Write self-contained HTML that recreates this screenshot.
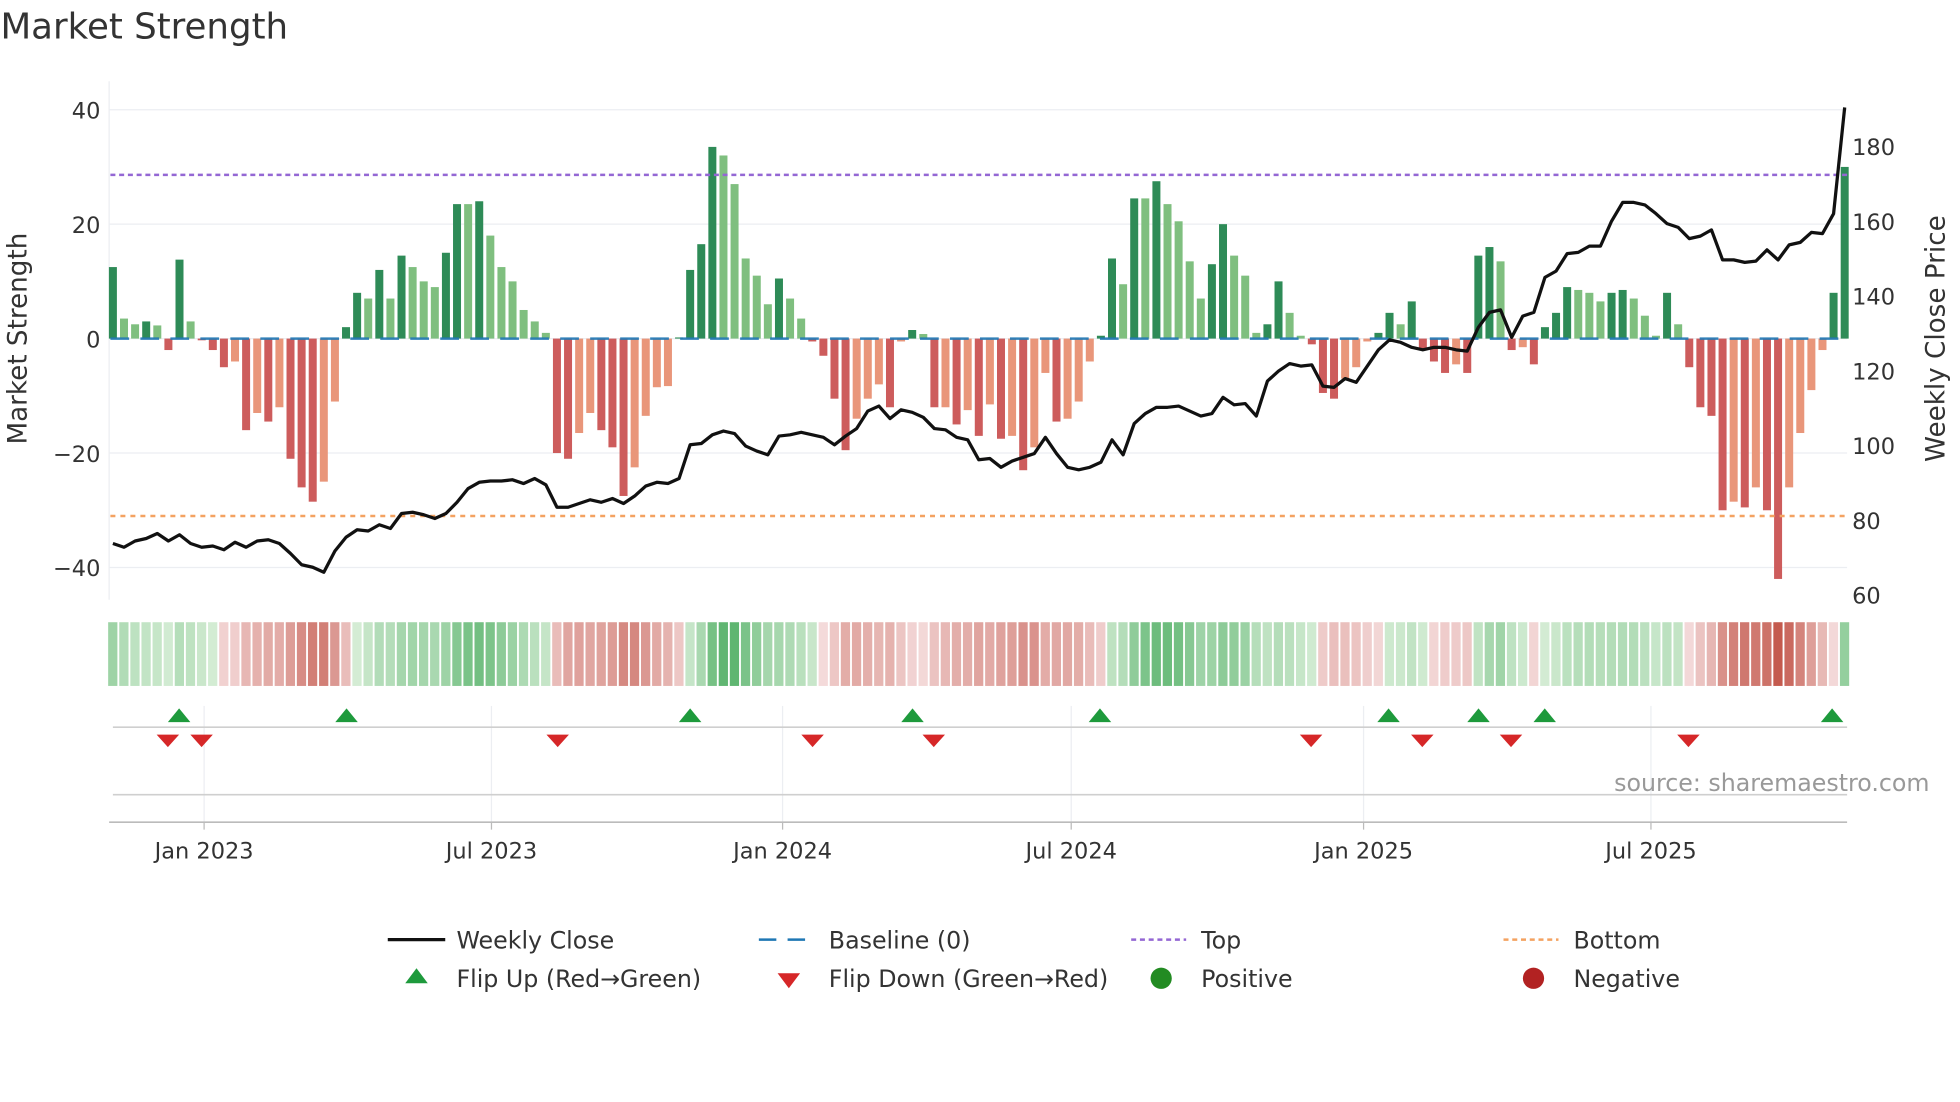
<!DOCTYPE html>
<html><head><meta charset="utf-8"><style>
html,body{margin:0;padding:0;background:#fff;width:1960px;height:1102px;overflow:hidden}
svg{display:block}
text{font-family:"DejaVu Sans","Liberation Sans",sans-serif;fill:#333}
</style></head><body>
<svg id="s" width="1960" height="1102" viewBox="0 0 1568 882" xmlns="http://www.w3.org/2000/svg">
<text x="0" y="31" font-size="28.5">Market Strength</text>
<g id="g"></g>
<text x="1544" y="633" font-size="19" text-anchor="end" style="fill:#999">source: sharemaestro.com</text>
</svg>
<script>
const V=[12.5,3.5,2.5,3,2.3,-2,13.8,3,-0.3,-2,-5,-4,-16,-13,-14.5,-12,-21,-26,-28.5,-25,-11,2,8,7,12,7,14.5,12.5,10,9,15,23.5,23.5,24,18,12.5,10,5,3,1,-20,-21,-16.5,-13,-16,-19,-27.5,-22.5,-13.5,-8.5,-8.3,0.2,12,16.5,33.5,32,27,14,11,6,10.5,7,3.5,-0.5,-3,-10.5,-19.5,-14,-10.5,-8,-12,-0.5,1.5,0.8,-12,-12,-15,-12.5,-17,-11.5,-17.5,-17,-23,-19,-6,-14.5,-14,-11,-4,0.5,14,9.5,24.5,24.5,27.5,23.5,20.5,13.5,7,13,20,14.5,11,1,2.5,10,4.5,0.5,-1,-9.5,-10.5,-7,-5,-0.5,1,4.5,2.5,6.5,-2,-4,-6,-4.5,-6,14.5,16,13.5,-2,-1.5,-4.5,2,4.5,9,8.5,8,6.5,8,8.5,7,4,0.5,8,2.5,-5,-12,-13.5,-30,-28.5,-29.5,-26,-30,-42,-26,-16.5,-9,-2,8,30];
const P=[435,438,433,431,427,433,428,435,438,437,440,434,438,433,432,435,443,452,454,458,441,430,424,425,420,423,411,410,412,415,411,402,391,386,385,385,384,387,383,388,406,406,403,400,402,399,403,397,389,386,387,383,356,355,348,345,347,357,361,364,349,348,346,348,350,356,349,343,329,325,335,328,330,334,343,344,350,352,368,367,374,369,366,363,350,363,374,376,374,370,352,364,339,331,326,326,325,329,333,331,318,324,323,333,305,297,291,293,292,309,310,303,306,293,280,272,274,278,280,278,278,280,281,262,250,248,270,253,250,222,217,203,202,197,197,177,162,162,164,171,179,182,191,189,184,208,208,210,209,200,208,196,194,186,187,171,86];
const X=i=>90+i*8.885, Y=v=>271-v*4.58;
let h='';
[40,20,0,-20,-40].forEach(v=>{h+=`<line x1="87" x2="1478" y1="${Y(v)}" y2="${Y(v)}" stroke="#eceef2" stroke-width="1"/>`;
h+=`<text x="80" y="${Y(v)+7}" font-size="18" text-anchor="end">${v<0?'\u2212'+(-v):v}</text>`});
[180,160,140,120,100,80,60].forEach(p=>{const y=476-(p-60)*2.99;h+=`<text x="1482" y="${y+7}" font-size="18">${p}</text>`});
h+=`<line x1="87" x2="87" y1="65" y2="480" stroke="#eceef2"/>`;
h+=`<text transform="translate(21,271) rotate(-90)" font-size="21" text-anchor="middle">Market Strength</text>`;
h+=`<text transform="translate(1556,271) rotate(-90)" font-size="21" text-anchor="middle">Weekly Close Price</text>`;
V.forEach((v,i)=>{const pv=i?V[i-1]:0;let c;
 if(v>=0)c=v>pv?'#2e8b57':'#7fbf7f';else c=v<pv?'#cd5c5c':'#e9967a';
 const y=v>=0?Y(v):271,hh=Math.abs(v)*4.58;h+=`<rect x="${X(i)-3.2}" y="${y}" width="6.4" height="${Math.max(hh,0.6)}" fill="${c}"/>`;});
h+=`<line x1="88" x2="1478" y1="271" y2="271" stroke="#1f77b4" stroke-width="2" stroke-dasharray="15,9" opacity=".9"/>`;
h+=`<line x1="88" x2="1478" y1="140" y2="140" stroke="#9467d4" stroke-width="2" stroke-dasharray="4,3"/>`;
h+=`<line x1="88" x2="1478" y1="413" y2="413" stroke="#f4a261" stroke-width="2" stroke-dasharray="4,4"/>`;
h+=`<polyline fill="none" stroke="#111" stroke-width="2.6" stroke-linejoin="round" points="${P.map((y,i)=>X(i)+','+y).join(' ')}"/>`;
let e=0;V.forEach((v,i)=>{e=i?e*0.5+v*0.5:v;let c;
 if(e>=0){const t=Math.min(e/30,1);c=`rgb(${Math.round(212-t*130)},${Math.round(236-t*60)},${Math.round(212-t*110)})`;}
 else{const t=Math.min(-e/35,1);c=`rgb(${Math.round(244-t*48)},${Math.round(218-t*128)},${Math.round(218-t*140)})`;}
 h+=`<rect x="${X(i)-3.8}" y="498" width="7.4" height="51" fill="${c}"/>`;});
[163,393,626,857,1091,1321].forEach(x=>{h+=`<line x1="${x}" x2="${x}" y1="565" y2="658" stroke="#eceef2"/>`});
h+=`<line x1="90" x2="1478" y1="582" y2="582" stroke="#cfcfcf" stroke-width="1.3"/>`;
h+=`<line x1="90" x2="1478" y1="636" y2="636" stroke="#cfcfcf" stroke-width="1.3"/>`;
h+=`<line x1="87" x2="1478" y1="658" y2="658" stroke="#bbb" stroke-width="1.3"/>`;
const up=x=>`<polygon points="${x-9},${578} ${x+9},${578} ${x},${567}" fill="#1e9a3c"/>`;
const dn=x=>`<polygon points="${x-9},${588} ${x+9},${588} ${x},${598}" fill="#d62728"/>`;
[143,277,552,730,880,1111,1183,1236,1466].forEach(x=>h+=up(x));
[134,161,446,650,747,1049,1138,1209,1351].forEach(x=>h+=dn(x));
[['Jan 2023',163],['Jul 2023',393],['Jan 2024',626],['Jul 2024',857],['Jan 2025',1091],['Jul 2025',1321]].forEach(([t,x])=>{
 h+=`<line x1="${x}" x2="${x}" y1="658" y2="664" stroke="#bbb"/><text x="${x}" y="687" font-size="18" text-anchor="middle">${t}</text>`});
const T=(x,y,t)=>`<text x="${x}" y="${y+7}" font-size="19">${t}</text>`;
h+=`<line x1="310" x2="356" y1="752" y2="752" stroke="#111" stroke-width="2.6"/>`+T(365,752,'Weekly Close');
h+=`<line x1="607" x2="651" y1="752" y2="752" stroke="#1f77b4" stroke-width="2" stroke-dasharray="14,9"/>`+T(663,752,'Baseline (0)');
h+=`<line x1="905" x2="949" y1="752" y2="752" stroke="#9467d4" stroke-width="2" stroke-dasharray="4,3"/>`+T(961,752,'Top');
h+=`<line x1="1203" x2="1247" y1="752" y2="752" stroke="#f4a261" stroke-width="2" stroke-dasharray="4,3"/>`+T(1259,752,'Bottom');
h+=`<polygon points="324,787 342,787 333,775" fill="#1e9a3c"/>`+T(365,783,'Flip Up (Red→Green)');
h+=`<polygon points="622,779 640,779 631,791" fill="#d62728"/>`+T(663,783,'Flip Down (Green→Red)');
h+=`<circle cx="929" cy="783" r="8.5" fill="#228b22"/>`+T(961,783,'Positive');
h+=`<circle cx="1227" cy="783" r="8.5" fill="#b22222"/>`+T(1259,783,'Negative');
document.getElementById('g').innerHTML=h;
</script>
</body></html>
